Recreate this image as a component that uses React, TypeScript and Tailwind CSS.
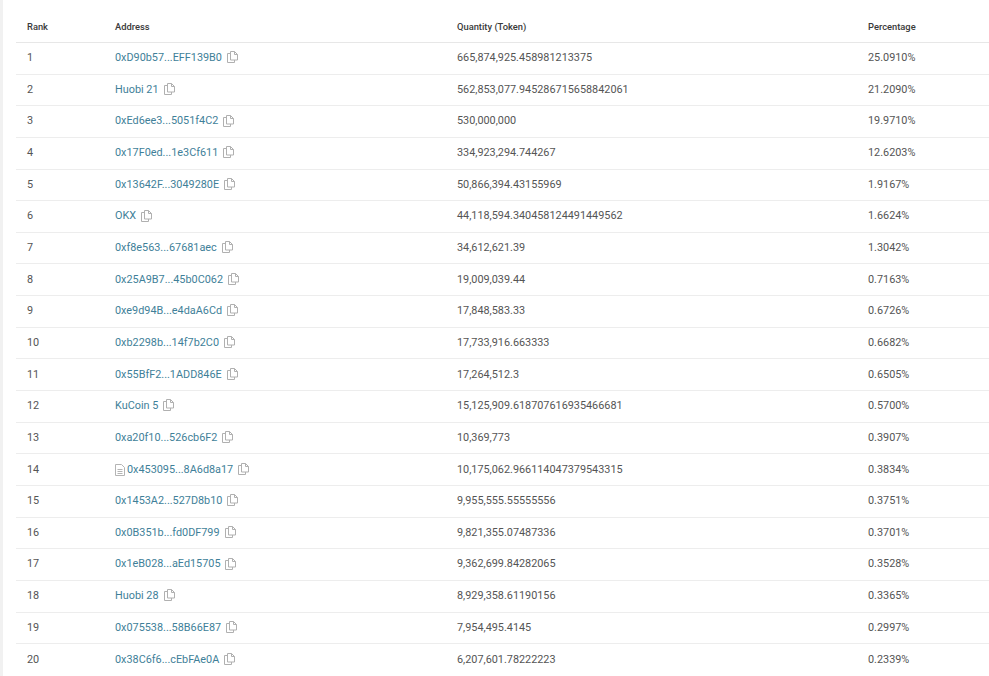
const holders = [
  { address: "0xD90b57...EFF139B0", quantity: "665,874,925.458981213375", percentage: "25.0910%" },
  { address: "Huobi 21", quantity: "562,853,077.945286715658842061", percentage: "21.2090%" },
  { address: "0xEd6ee3...5051f4C2", quantity: "530,000,000", percentage: "19.9710%" },
  { address: "0x17F0ed...1e3Cf611", quantity: "334,923,294.744267", percentage: "12.6203%" },
  { address: "0x13642F...3049280E", quantity: "50,866,394.43155969", percentage: "1.9167%" },
  { address: "OKX", quantity: "44,118,594.340458124491449562", percentage: "1.6624%" },
  { address: "0xf8e563...67681aec", quantity: "34,612,621.39", percentage: "1.3042%" },
  { address: "0x25A9B7...45b0C062", quantity: "19,009,039.44", percentage: "0.7163%" },
  { address: "0xe9d94B...e4daA6Cd", quantity: "17,848,583.33", percentage: "0.6726%" },
  { address: "0xb2298b...14f7b2C0", quantity: "17,733,916.663333", percentage: "0.6682%" },
  { address: "0x55BfF2...1ADD846E", quantity: "17,264,512.3", percentage: "0.6505%" },
  { address: "KuCoin 5", quantity: "15,125,909.618707616935466681", percentage: "0.5700%" },
  { address: "0xa20f10...526cb6F2", quantity: "10,369,773", percentage: "0.3907%" },
  { address: "0x453095...8A6d8a17", quantity: "10,175,062.966114047379543315", percentage: "0.3834%", contract: true },
  { address: "0x1453A2...527D8b10", quantity: "9,955,555.55555556", percentage: "0.3751%" },
  { address: "0x0B351b...fd0DF799", quantity: "9,821,355.07487336", percentage: "0.3701%" },
  { address: "0x1eB028...aEd15705", quantity: "9,362,699.84282065", percentage: "0.3528%" },
  { address: "Huobi 28", quantity: "8,929,358.61190156", percentage: "0.3365%" },
  { address: "0x075538...58B66E87", quantity: "7,954,495.4145", percentage: "0.2997%" },
  { address: "0x38C6f6...cEbFAe0A", quantity: "6,207,601.78222223", percentage: "0.2339%" },
];

function CopyIcon() {
  return (
    <svg width="11" height="12" viewBox="0 0 11 12" fill="none" stroke="#b0b0b0" strokeWidth="1" className="ml-[5px] shrink-0 -translate-y-px">
      <path d="M3.5 0.5h4l3 3v5.5h-7z" />
      <path d="M7.5 0.5v3h3" />
      <path d="M3.5 2.5h-3v9h7v-2.5" />
    </svg>
  );
}

function FileIcon() {
  return (
    <svg width="10" height="12" viewBox="0 0 10 12" fill="none" stroke="#b4b4b4" strokeWidth="1" className="mr-[2px] shrink-0">
      <path d="M0.5 0.5h6l3 3v8h-9z" />
      <path d="M2.5 5.5h5M2.5 7.5h5M2.5 9.5h5" />
    </svg>
  );
}

export default function App() {
  return (
    <div className="h-[676px] overflow-hidden bg-white border-l-[3px] border-[#f1f1f1] pl-[13px] font-['Roboto',sans-serif] text-[#555]">
      <div className="grid grid-cols-[88px_342px_411px_1fr] items-center h-[43px] pt-[13px] pl-[11px] border-b border-[#e7e7e7] text-[9.35px] font-medium text-[#3a3a3a]">
        <div>Rank</div>
        <div>Address</div>
        <div>Quantity (Token)</div>
        <div>Percentage</div>
      </div>
      {holders.map((h, i) => (
        <div
          key={h.address}
          className="grid grid-cols-[88px_342px_411px_1fr] items-center h-[31.65px] pl-[11px] border-b border-[#ededed] last:border-b-0 text-[10.85px]"
        >
          <div>{i + 1}</div>
          <div className="flex items-center text-[#3f7f99]">
            {h.contract && <FileIcon />}
            <span>{h.address}</span>
            <CopyIcon />
          </div>
          <div>{h.quantity}</div>
          <div>{h.percentage}</div>
        </div>
      ))}
    </div>
  );
}
